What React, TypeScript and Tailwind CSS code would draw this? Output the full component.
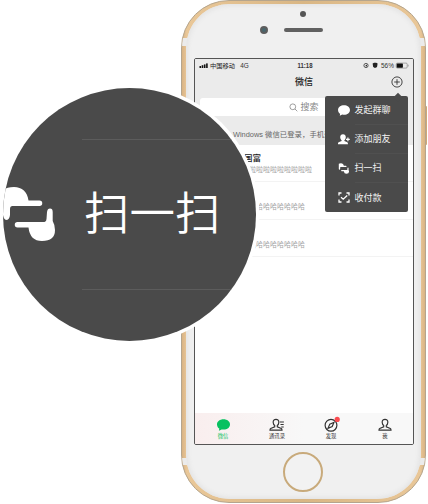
import React from 'react';

const cjk = "font-['Liberation_Sans','Noto_Sans_CJK_SC',sans-serif]";

function Txt({ x, y, w, size, fill, weight = 400, children }: { x: number; y: number; w: number; size: number; fill: string; weight?: number; children: string }) {
  return (
    <text x={x} y={y} textLength={w} lengthAdjust="spacingAndGlyphs" fontSize={size} fill={fill} fontWeight={weight}>
      {children}
    </text>
  );
}

function StatusBar() {
  return (
    <svg width="218" height="14" viewBox="195 59 218 14" className="block shrink-0">
      <g fill="#111">
        <rect x="199.5" y="66" width="1.6" height="2" />
        <rect x="201.7" y="65.2" width="1.6" height="2.8" />
        <rect x="203.9" y="64.4" width="1.6" height="3.6" />
        <rect x="206.1" y="63.4" width="1.6" height="4.6" />
      </g>
      <Txt x={210} y={68} w={25} size={6.2} fill="#222">中国移动</Txt>
      <Txt x={240.2} y={68} w={8.6} size={6.4} fill="#333">4G</Txt>
      <Txt x={297.5} y={68} w={15} size={6.6} fill="#333" weight={700}>11:18</Txt>
      <circle cx="366" cy="65.5" r="2.1" fill="none" stroke="#333" strokeWidth=".8" />
      <path d="M365 66l2-1.5v2z" fill="#222" />
      <path d="M372.6 63.5l1.5-.8h2l1.5.8-.5 3-1 1.2h-2l-1-1.2z" fill="#222" />
      <Txt x={381} y={68} w={13} size={6.4} fill="#333">56%</Txt>
      <rect x="396.2" y="63.1" width="11" height="5" rx="1.1" fill="none" stroke="#777" strokeWidth=".6" />
      <rect x="396.7" y="63.5" width="6.2" height="4.2" rx=".6" fill="#111" />
      <path d="M408.2 64.7v1.8" stroke="#888" strokeWidth=".7" />
    </svg>
  );
}

function Row({ children }: { children?: React.ReactNode }) {
  return <div className="h-[37.3px] shrink-0 border-b border-[#f3f3f3]">{children}</div>;
}

function Preview({ children, pad }: { children: string; pad: string }) {
  return <div className={`whitespace-nowrap text-[7px] leading-[9px] text-[#a3a3a3] ${pad}`}>{children}</div>;
}

function ChatBubble({ className }: { className: string }) {
  return (
    <svg viewBox="0 0 13 12" className={className} fill="currentColor">
      <path d="M6.5.2C2.9.2 0 2.3 0 5.4c0 1.8 1 3.300 2.300 4.200L1.900 11.800l2.700-1.400c4.500 1 8.400-1.500 8.400-5C13 2.300 10.100.2 6.500.2z" />
    </svg>
  );
}

function Hands({ className }: { className: string }) {
  return (
    <svg viewBox="3 186 53 56" className={className} fill="currentColor">
      <path d="M3 190Q7 187 14 187C22 187 27.500 192 28.500 200.500H39.500a2.750 2.750 0 0 1 0 5.500H12.500Q10 206 10 209V215Q9.500 220 6 220Q3.500 219 3 215z" />
      <path d="M17.500 222H44.500Q46.500 221.500 46.500 219L47 212Q47.500 208.600 50 208.600Q52.700 208.600 52.700 212V221Q55 225 55 230Q55 241 42 241Q30 241 28.500 227.500H17.500a2.750 2.750 0 0 1 0-5.500z" />
    </svg>
  );
}

function AddFriend() {
  return (
    <svg viewBox="0 0 12 11" className="h-[11px] w-3" fill="currentColor">
      <path d="M5 .3C3.200.3 2.100 1.500 2.200 3.300c.1 1.500.6 2.400 1.400 3v.7L.6 8.200Q-.1 8.700 0 10.300h10q0-1.600-.7-2.100L6.400 7v-.7c.8-.6 1.300-1.500 1.400-3C7.900 1.500 6.800.3 5 .3z" />
      <path d="M9.900 3.500v3.800M8 5.400h3.800" stroke="currentColor" strokeWidth="1.200" />
    </svg>
  );
}

function Pay() {
  return (
    <svg viewBox="0 0 12 11" className="h-[11px] w-3" fill="none" stroke="currentColor" strokeWidth="1.300">
      <path d="M1 3.500V1h2.500M8.500 1H11v2.500M11 7.500V10H8.500M3.500 10H1V7.500M3 5.200l2.200 2 4-3.700" />
    </svg>
  );
}

function MenuItem({ icon, label, last }: { icon: React.ReactNode; label: string; last?: boolean }) {
  return (
    <div className="flex h-[29px] items-center pl-[13px]">
      <span className="flex w-[12px] shrink-0 justify-center">{icon}</span>
      <span className={`ml-[5px] flex h-[29px] flex-1 items-center pt-[2px] text-[9px] text-[#f3f3f3] ${last ? '' : 'border-b border-[#505050]'}`}>{label}</span>
    </div>
  );
}

function Person({ contacts }: { contacts?: boolean }) {
  return (
    <svg viewBox="0 0 16 14" className="h-[14px] w-4" fill="none" stroke="#333" strokeWidth="1.200">
      <path d={contacts
        ? 'M7 1.300C5.200 1.300 4 2.600 4.200 4.500c.1 1.500.7 2.500 1.500 3.100v1.300L1.700 10.500q-.7.300-.7 1.700h12q0-1.400-.7-1.700L8.300 8.900V7.600c.8-.6 1.400-1.600 1.500-3.100.2-1.900-1-3.200-2.800-3.200z'
        : 'M8 1.300C6.200 1.300 5 2.600 5.200 4.500c.1 1.500.7 2.500 1.500 3.100v1.300L2.700 10.500q-.7.300-.7 1.700h12q0-1.400-.7-1.700L9.300 8.900V7.600c.8-.6 1.400-1.600 1.500-3.100.2-1.900-1-3.200-2.800-3.200z'} />
      {contacts && <path d="M10.900 4h4M11.500 6.500h3.200M12.200 9h2.500" />}
    </svg>
  );
}

function Tab({ icon, label, active }: { icon: React.ReactNode; label: string; active?: boolean }) {
  return (
    <div className={`flex w-[54px] flex-col items-center pt-[4px] ${active ? 'text-[#07c160]' : 'text-[#333]'}`}>
      <div className="flex h-[15px] items-center">{icon}</div>
      <span className="mt-[1px] whitespace-nowrap text-[5.3px] leading-[7px]">{label}</span>
    </div>
  );
}

function Screen() {
  return (
    <div className="relative ml-[8px] flex h-[387px] w-[220px] flex-col overflow-hidden rounded-[2px] border border-[#555] bg-white">
      <div className="flex h-[66px] shrink-0 flex-col bg-[#ebebeb]">
        <StatusBar />
        <div className="relative flex h-[18px] items-center justify-center pt-[2px] text-[9px] font-medium text-[#222]">
          微信
          <svg viewBox="0 0 12 12" className="absolute right-[10px] top-[3px] size-3" fill="none" stroke="#333" strokeWidth=".9">
            <circle cx="6" cy="6" r="5.100" />
            <path d="M3.200 6h5.600M6 3.200v5.600" />
          </svg>
        </div>
        <div className="mx-[5px] mt-[7px] flex h-[18px] items-center justify-center rounded-[3px] bg-white text-[9px] text-[#888]">
          <svg viewBox="0 0 9 9" className="mr-[2px] size-[9px]" fill="none" stroke="currentColor" strokeWidth=".8">
            <circle cx="3.800" cy="3.800" r="2.900" /><path d="M6 6l2.300 2.300" />
          </svg>
          <span className="pt-[2px]">搜索</span>
        </div>
      </div>
      <div className="flex h-[20px] shrink-0 items-center whitespace-nowrap bg-[#ebebeb] pl-[38px] text-[7.4px] text-[#666]">Windows 微信已登录，手机通知已关闭</div>
      <div className="flex flex-1 flex-col">
        <Row>
          <div className="pl-[49px] pt-[8px] text-[8.5px] font-medium leading-[10px] text-[#222]">国富</div>
          <Preview pad="pl-[47px] pt-[2px]">啦啦啦啦啦啦啦啦啦啦</Preview>
        </Row>
        <Row><Preview pad="pl-[54px] pt-[20px]">哈哈哈哈哈哈哈哈</Preview></Row>
        <Row><Preview pad="pl-[47px] pt-[20px]">哈哈哈哈哈哈哈哈哈</Preview></Row>
      </div>
      <div className="flex h-[31px] shrink-0 justify-between bg-[linear-gradient(90deg,#f9eeee,#f8f8f8_50%)] px-[1px]">
        <Tab active label="微信" icon={<ChatBubble className="h-3 w-[13px]" />} />
        <Tab label="通讯录" icon={<Person contacts />} />
        <Tab label="发现" icon={
          <svg viewBox="0 0 16 14" className="h-[14px] w-4 overflow-visible" fill="none" stroke="#333" strokeWidth="1.200">
            <circle cx="8" cy="7.300" r="5.900" /><path d="M11 4.300L9.200 8.500 5 10.300l1.800-4.200z" /><circle cx="14.200" cy="1.400" r="2.600" fill="#fa4b50" stroke="none" />
          </svg>
        } />
        <Tab label="我" icon={<Person />} />
      </div>
      <div className="absolute right-[5px] top-[37px] h-[116px] w-[83.5px] rounded-[2px] bg-[#4a4a4a] text-white">
        <span className="absolute -top-[2px] right-[7px] size-[6px] rotate-45 bg-[#4a4a4a]" />
        <MenuItem label="发起群聊" icon={<ChatBubble className="h-[11px] w-3" />} />
        <MenuItem label="添加朋友" icon={<AddFriend />} />
        <MenuItem label="扫一扫" icon={<Hands className="h-[11px] w-3" />} />
        <MenuItem last label="收付款" icon={<Pay />} />
      </div>
    </div>
  );
}

function Phone() {
  return (
    <div className="relative ml-[181px] h-[503px] w-[246px]">
      <span className="absolute right-0 top-[106px] h-[39px] w-[3px] rounded-r-[1px] bg-[#d0a777]" />
      <div className="relative h-full w-[245px] overflow-hidden rounded-[48px] border border-[#b5a58d] bg-[linear-gradient(90deg,#d9b384,#e9c798_2%,#d9b684_50%,#e9c798_98%,#d9b384)] px-[4px] pb-[3px] pt-[3px]">
        <span className="absolute left-0 top-[37px] h-[8px] w-full bg-[#ebebeb]" />
        <span className="absolute bottom-[37px] left-0 h-[7px] w-full bg-[#ebebeb]" />
        <div className="relative h-full rounded-[44px] bg-[#f0f0f0] pt-[54px] shadow-[inset_0_0_4px_2px_#e4e4e4]">
          <span className="absolute left-[114px] top-[7px] size-[6px] rounded-full bg-[#555]" />
          <span className="absolute left-[74px] top-[22px] size-[8px] rounded-full border-2 border-[#5d5d5d] bg-[#47666d]" />
          <span className="absolute left-[98px] top-[24px] h-[4px] w-[39px] rounded-full bg-[#616161]" />
          <Screen />
          <span className="absolute left-[97px] top-[448px] size-[40px] rounded-full border-2 border-[#c8aa7b] bg-[#f2f2f2]" />
        </div>
      </div>
    </div>
  );
}

function Magnifier() {
  return (
    <div className="absolute left-[3px] top-[88px] size-[253px] rounded-full bg-[#4a4a4a] text-white shadow-[0_0_0_3.5px_white]">
      <div className="relative size-full overflow-hidden rounded-full">
        <div className="ml-[79px] mt-[51px] flex h-[151px] items-center border-y border-[#5c5c5c]">
          <span className="whitespace-nowrap pl-[2px] text-[45.5px] leading-none font-[350]">扫一扫</span>
        </div>
        <Hands className="absolute left-0 top-[98px] h-[56px] w-[53px]" />
      </div>
    </div>
  );
}

export default function App() {
  return (
    <main className={`relative h-[504px] w-[428px] overflow-hidden bg-white ${cjk}`}>
      <Phone />
      <Magnifier />
    </main>
  );
}
